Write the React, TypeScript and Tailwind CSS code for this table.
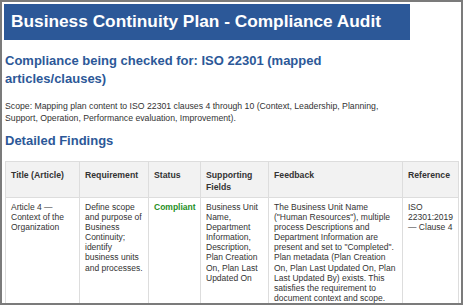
import React from 'react';

const rows = [
  {
    title: 'Article 4 — Context of the Organization',
    requirement: 'Define scope and purpose of Business Continuity; identify business units and processes.',
    status: 'Compliant',
    fields: 'Business Unit Name, Department Information, Description, Plan Creation On, Plan Last Updated On',
    feedback:
      'The Business Unit Name ("Human Resources"), multiple process Descriptions and Department Information are present and set to "Completed". Plan metadata (Plan Creation On, Plan Last Updated On, Plan Last Updated By) exists. This satisfies the requirement to document context and scope.',
    reference: 'ISO 22301:2019 — Clause 4',
  },
];

const headers = ['Title (Article)', 'Requirement', 'Status', 'Supporting Fields', 'Feedback', 'Reference'];

export default function App() {
  return (
    <div className="w-[463px] h-[305px] overflow-hidden border-2 border-[#7b7b7b] bg-white font-['Liberation_Sans',Arial,sans-serif] text-[#333]">
      <div className="pt-[2px] px-[3px]">
        {/* Title bar */}
        <div className="-ml-px w-[406px] h-[36px] bg-[#2c5898] flex items-center pl-[7px]">
          <h1 className="text-white font-bold text-[17.3px] leading-none">Business Continuity Plan - Compliance Audit</h1>
        </div>

        <div className="w-[405px]">
          <h2 className="mt-[12px] text-[#2c5898] font-bold text-[13px] leading-[18px]">
            Compliance being checked for: ISO 22301 (mapped articles/clauses)
          </h2>

          <p className="mt-[12px] text-[8.7px] leading-[12px]">
            Scope: Mapping plan content to ISO 22301 clauses 4 through 10 (Context, Leadership, Planning, Support, Operation, Performance evaluation, Improvement).
          </p>

          <h2 className="mt-[8px] text-[#2c5898] font-bold text-[13px] leading-[18px]">Detailed Findings</h2>
        </div>

        <table className="mt-[11px] w-[453px] table-fixed border-collapse">
          <colgroup>
            <col className="w-[74px]" />
            <col className="w-[69px]" />
            <col className="w-[52px]" />
            <col className="w-[68px]" />
            <col className="w-[134px]" />
            <col className="w-[56px]" />
          </colgroup>
          <thead>
            <tr className="bg-[#f2f2f2]">
              {headers.map((h) => (
                <th
                  key={h}
                  className="border border-[#dddddd] px-[5px] pt-[7px] pb-[4px] text-left align-top font-bold text-[8.7px] leading-[12px]"
                >
                  {h}
                </th>
              ))}
            </tr>
          </thead>
          <tbody>
            {rows.map((r, i) => (
              <tr key={i} className="align-top text-[8.5px] leading-[10.1px]">
                <td className="border border-[#dddddd] px-[5px] pt-[4px] pb-[20px]">{r.title}</td>
                <td className="border border-[#dddddd] px-[5px] pt-[4px]">{r.requirement}</td>
                <td className="border border-[#dddddd] px-[5px] pt-[4px] font-bold text-[#1f8f1f]">{r.status}</td>
                <td className="border border-[#dddddd] px-[5px] pt-[4px]">{r.fields}</td>
                <td className="border border-[#dddddd] pl-[5px] pr-[4px] pt-[4px]">{r.feedback}</td>
                <td className="border border-[#dddddd] pl-[5px] pr-[2px] pt-[4px]">{r.reference}</td>
              </tr>
            ))}
          </tbody>
        </table>
      </div>
    </div>
  );
}
